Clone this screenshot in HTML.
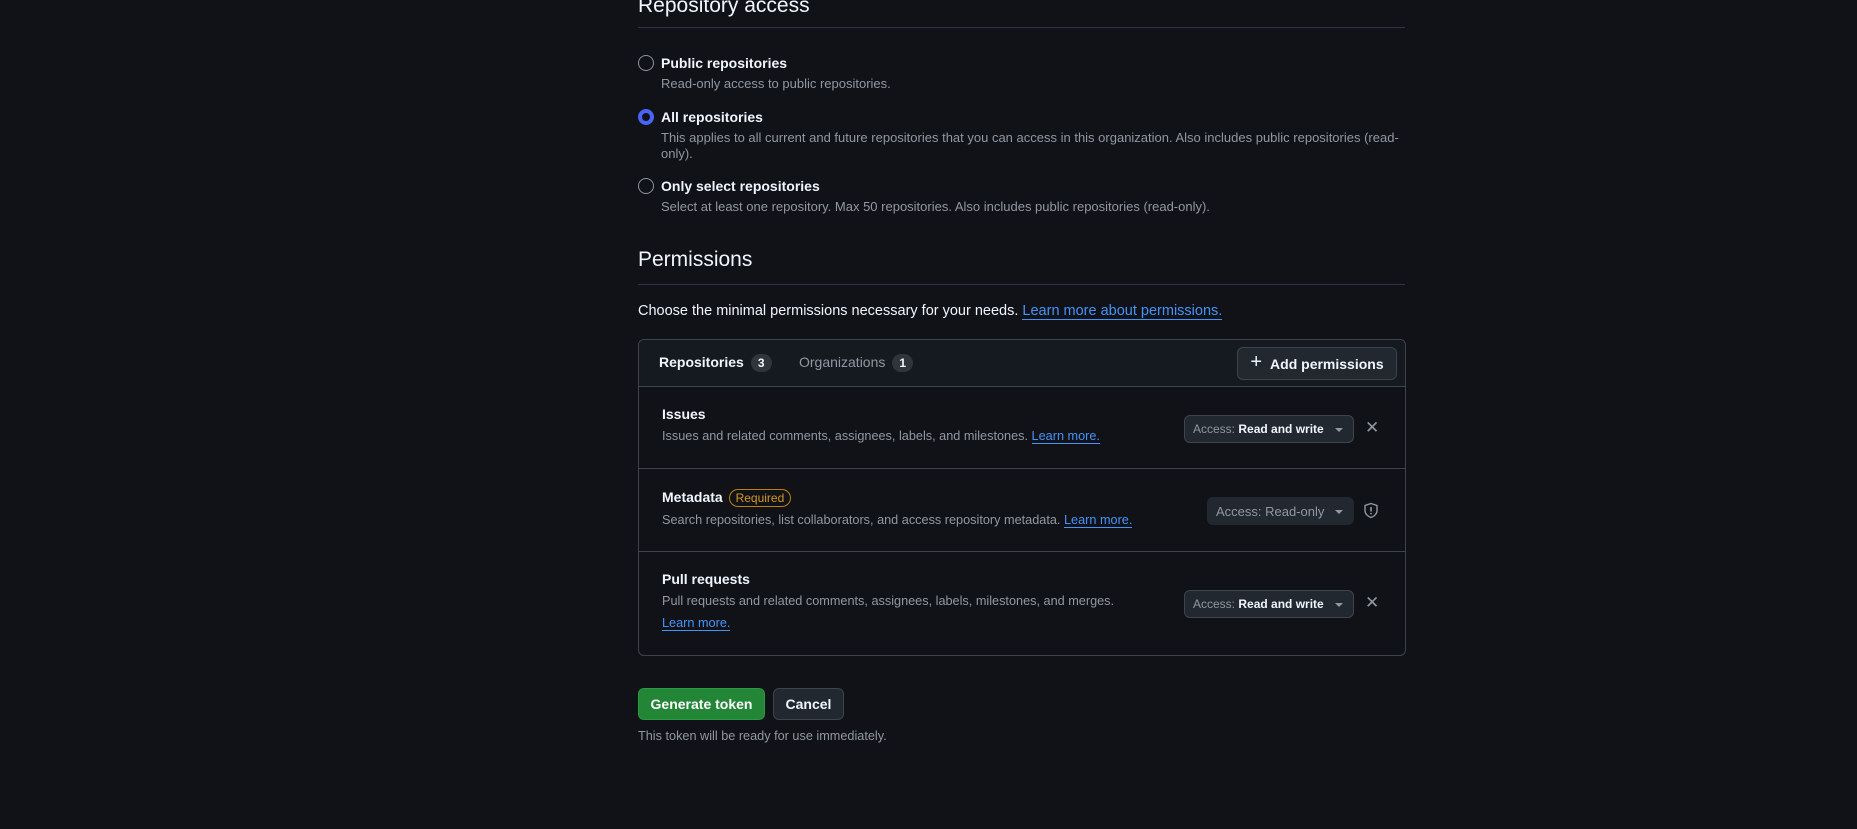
<!DOCTYPE html>
<html><head><meta charset="utf-8"><style>
*{box-sizing:border-box;margin:0;padding:0}
body{width:1857px;height:829px;background:#101217;font-family:"Liberation Sans",sans-serif;color:#f0f6fc;position:relative;overflow:hidden}
.a{position:absolute;white-space:nowrap}
.h{font-size:21px;color:#f0f6fc}
.line{position:absolute;left:638px;width:767px;height:1px;background:#30363d}
.radio{position:absolute;width:16px;height:16px;border-radius:50%;border:1px solid #8b949e}
.rt{font-size:14px;font-weight:bold}
.d{font-size:13px;color:#9198a1}
a{color:#4493f8;text-decoration:none;border-bottom:1px solid #4493f8}
.box{position:absolute;left:638px;top:339px;width:768px;height:317px;border:1px solid #3d444d;border-radius:6px;overflow:hidden}
.cnt{display:inline-block;background:#2f353d;border-radius:10px;font-size:12px;font-weight:bold;padding:2px 7px;margin-left:7px;color:#f0f6fc}
.btn{position:absolute;border:1px solid #3d444d;border-radius:6px;background:#212830;font-size:14px;font-weight:bold;display:flex;align-items:center;justify-content:center}
.dd{position:absolute;border:1px solid #3d444d;border-radius:6px;background:#212830;font-size:12px;display:flex;align-items:center;padding-left:8px}
.car{width:0;height:0;border-left:4px solid transparent;border-right:4px solid transparent;border-top:4px solid #9198a1;position:absolute;right:10px;top:12px}
</style></head><body>
<div class="a h" style="left:638px;top:-6px">Repository access</div>
<div class="line" style="top:27px"></div>

<div class="radio" style="left:638px;top:55px"></div>
<div class="a rt" style="left:661px;top:55px">Public repositories</div>
<div class="a d" style="left:661px;top:76px">Read-only access to public repositories.</div>

<div class="radio" style="left:638px;top:109px;border:4px solid #4a63f5;background:#101217"></div>
<div class="a rt" style="left:661px;top:109px">All repositories</div>
<div class="a d" style="left:661px;top:130px">This applies to all current and future repositories that you can access in this organization. Also includes public repositories (read-</div>
<div class="a d" style="left:661px;top:146px">only).</div>

<div class="radio" style="left:638px;top:178px"></div>
<div class="a rt" style="left:661px;top:178px">Only select repositories</div>
<div class="a d" style="left:661px;top:199px">Select at least one repository. Max 50 repositories. Also includes public repositories (read-only).</div>

<div class="a h" style="left:638px;top:248px">Permissions</div>
<div class="line" style="top:284px"></div>
<div class="a" style="left:638px;top:303px;font-size:14.5px">Choose the minimal permissions necessary for your needs. <a>Learn more about permissions.</a></div>

<div class="box">
 <div style="position:absolute;left:0;top:0;width:100%;height:47px;background:#151a21;border-bottom:1px solid #3d444d"></div>
 <div class="a" style="left:20px;top:14px;font-size:14px;font-weight:bold">Repositories<span class="cnt">3</span></div>
 <div class="a" style="left:160px;top:14px;font-size:14px;color:#9198a1">Organizations<span class="cnt">1</span></div>
 <div class="btn" style="left:598px;top:7px;width:160px;height:33px"><span style="font-size:20px;font-weight:normal;margin-right:8px;margin-top:-3px">+</span>Add permissions</div>
 <div style="position:absolute;left:0;top:128px;width:100%;height:1px;background:#3d444d"></div>
 <div style="position:absolute;left:0;top:211px;width:100%;height:1px;background:#3d444d"></div>

 <div class="a" style="left:23px;top:66px;font-size:14px;font-weight:bold">Issues</div>
 <div class="a d" style="left:23px;top:89px;font-size:12.7px">Issues and related comments, assignees, labels, and milestones. <a>Learn more.</a></div>
 <div class="dd" style="left:545px;top:75px;width:170px;height:28px"><span style="color:#9198a1">Access:&nbsp;</span><b style="color:#f0f6fc">Read and write</b><span class="car"></span></div>
 <div class="a" style="left:726px;top:78px;font-size:17px;color:#9198a1">✕</div>

 <div class="a" style="left:23px;top:149px;font-size:14px;font-weight:bold">Metadata <span style="display:inline-block;border:1px solid #bb8009;color:#d29922;border-radius:10px;font-size:12px;font-weight:normal;padding:1px 6px;margin-left:2px">Required</span></div>
 <div class="a d" style="left:23px;top:173px;font-size:12.7px">Search repositories, list collaborators, and access repository metadata. <a>Learn more.</a></div>
 <div class="dd" style="left:568px;top:157px;width:147px;height:28px;border-color:#212830;color:#9198a1;font-size:13px">Access: Read-only<span class="car"></span></div>
 <svg class="a" style="left:724px;top:162px" width="16" height="17" viewBox="0 0 16 17"><path d="M8 1.5 L14 3.5 V8.5 C14 12 11 14.5 8 15.5 C5 14.5 2 12 2 8.5 V3.5 Z" fill="none" stroke="#9198a1" stroke-width="1.4"/><path d="M8 5v4.5" stroke="#9198a1" stroke-width="1.6"/><circle cx="8" cy="11.6" r="0.9" fill="#9198a1"/></svg>

 <div class="a" style="left:23px;top:231px;font-size:14px;font-weight:bold">Pull requests</div>
 <div class="a d" style="left:23px;top:254px;font-size:12.7px">Pull requests and related comments, assignees, labels, milestones, and merges.</div>
 <div class="a d" style="left:23px;top:276px;font-size:12.7px"><a>Learn more.</a></div>
 <div class="dd" style="left:545px;top:250px;width:170px;height:28px"><span style="color:#9198a1">Access:&nbsp;</span><b style="color:#f0f6fc">Read and write</b><span class="car"></span></div>
 <div class="a" style="left:726px;top:253px;font-size:17px;color:#9198a1">✕</div>
</div>

<div class="btn" style="left:638px;top:688px;width:127px;height:32px;background:#238636;border-color:#2a9a3e;color:#fff">Generate token</div>
<div class="btn" style="left:773px;top:688px;width:71px;height:32px">Cancel</div>
<div class="a d" style="left:638px;top:729px;font-size:12.7px">This token will be ready for use immediately.</div>
</body></html>
